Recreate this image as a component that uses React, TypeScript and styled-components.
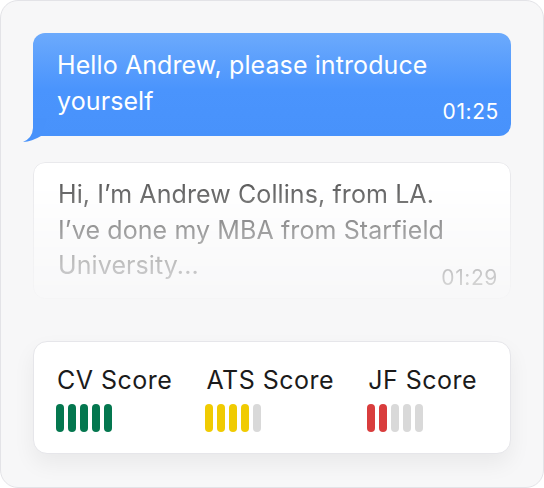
import React from "react";
import styled, { createGlobalStyle } from "styled-components";

const GlobalStyle = createGlobalStyle`
  html, body {
    margin: 0;
    padding: 0;
    background: #ffffff;
  }
  body {
    font-family: Inter, "Noto Sans", "Liberation Sans", sans-serif;
    -webkit-font-smoothing: antialiased;
  }
`;

// outer rounded panel
const Panel = styled.div`
  box-sizing: border-box;
  width: 544px;
  height: 488px;
  padding: 32px 32px 0 32px;
  background: #f7f7f8;
  border: 1px solid #e3e3e7;
  border-radius: 18px;
  display: flex;
  flex-direction: column;
`;

const Bubble = styled.div<{ $incoming?: boolean }>`
  position: relative;
  display: flex;
  flex-direction: column;
  border-radius: 12px;
  font-size: 25px;
  line-height: 35.5px;
  letter-spacing: 0.1px;
  ${(p) =>
    p.$incoming
      ? `
    margin-top: 26px;
    padding: 14px 12px 8px 24px;
    background: #ffffff;
    border: 1px solid #e9e9ec;
    color: #555555;
    -webkit-mask-image: linear-gradient(180deg, #000 12%, rgba(0,0,0,0.5) 55%, rgba(0,0,0,0.14) 100%);
    mask-image: linear-gradient(180deg, #000 12%, rgba(0,0,0,0.5) 55%, rgba(0,0,0,0.14) 100%);
  `
      : `
    padding: 15px 12px 12px 24px;
    background: linear-gradient(180deg, #6caafc 0%, #4a94fd 55%, #4892fb 100%);
    color: #ffffff;
    border-bottom-left-radius: 0;
  `}
`;

const Tail = styled.svg`
  position: absolute;
  left: -12px;
  bottom: -8px;
  width: 26px;
  height: 26px;
`;

const Time = styled.span<{ $lift: number }>`
  align-self: flex-end;
  font-size: 21px;
  line-height: 24px;
  letter-spacing: 0.6px;
  margin-top: ${(p) => -p.$lift}px;
`;

const ScoreCard = styled.div`
  margin-top: 42px;
  display: flex;
  gap: 34px;
  padding: 22px 23px 21px 23px;
  background: #ffffff;
  border: 1px solid #e6e6ea;
  border-radius: 14px;
  box-shadow: 0 10px 22px rgba(0, 0, 0, 0.06);
`;

const Score = styled.div`
  display: flex;
  flex-direction: column;
  gap: 8px;
`;

const ScoreLabel = styled.span`
  font-size: 25px;
  line-height: 32px;
  color: #1b1b1b;
  letter-spacing: 0.5px;
`;

const Bars = styled.div`
  display: flex;
  gap: 4px;
  margin-left: -1px;
`;

const Bar = styled.span<{ $color: string }>`
  width: 8px;
  height: 28px;
  border-radius: 4px;
  background: ${(p) => p.$color};
`;

const scores = [
  { label: "CV Score", filled: 5, color: "#04774f" },
  { label: "ATS Score", filled: 4, color: "#f0cb02" },
  { label: "JF Score", filled: 2, color: "#d93d3d" },
];

export default function App() {
  return (
    <>
      <GlobalStyle />
      <Panel>
        <Bubble>
          Hello Andrew, please introduce
          <br />
          yourself
          <Time $lift={19}>01:25</Time>
          <Tail viewBox="0 0 26 26">
            <path d="M12 0 L12 10 Q11.5 20 2 24 Q11 23.5 20 18 L26 0 Z" fill="#4892fb" />
          </Tail>
        </Bubble>
        <Bubble $incoming>
          Hi, I’m Andrew Collins, from LA.
          <br />
          I’ve done my MBA from Starfield
          <br />
          University...
          <Time $lift={18}>01:29</Time>
        </Bubble>
        <ScoreCard>
          {scores.map((s) => (
            <Score key={s.label}>
              <ScoreLabel>{s.label}</ScoreLabel>
              <Bars>
                {[0, 1, 2, 3, 4].map((i) => (
                  <Bar key={i} $color={i < s.filled ? s.color : "#d9d9d9"} />
                ))}
              </Bars>
            </Score>
          ))}
        </ScoreCard>
      </Panel>
    </>
  );
}
